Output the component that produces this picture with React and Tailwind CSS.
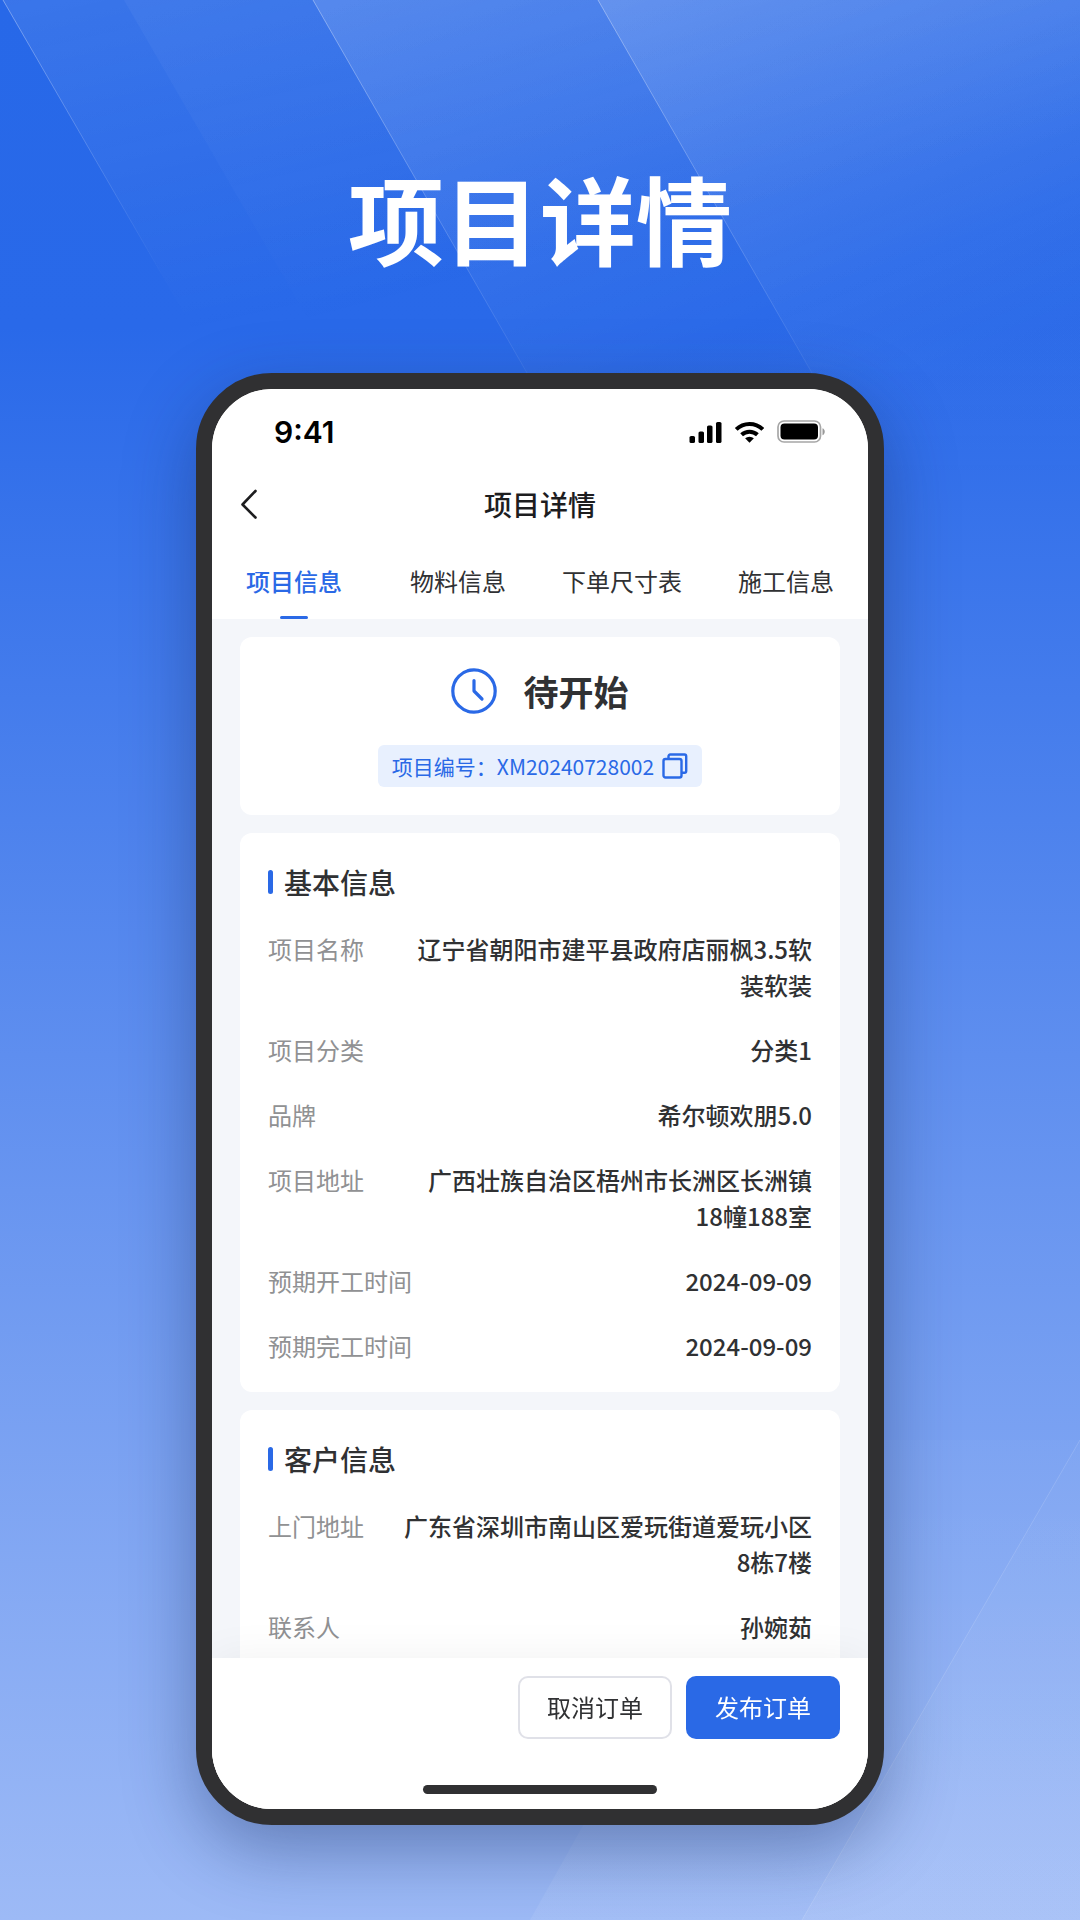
import React from "react";

const basicInfo = [
  ["项目名称", "辽宁省朝阳市建平县政府店丽枫3.5软装软装"],
  ["项目分类", "分类1"],
  ["品牌", "希尔顿欢朋5.0"],
  ["项目地址", "广西壮族自治区梧州市长洲区长洲镇18幢188室"],
  ["预期开工时间", "2024-09-09"],
  ["预期完工时间", "2024-09-09"],
];

const customerInfo = [
  ["上门地址", "广东省深圳市南山区爱玩街道爱玩小区8栋7楼"],
  ["联系人", "孙婉茹"],
];

const tabs = ["项目信息", "物料信息", "下单尺寸表", "施工信息"];

function Backdrop() {
  return (
    <svg
      aria-hidden="true"
      className="absolute inset-0 h-full w-full"
      viewBox="0 0 1080 1920"
      preserveAspectRatio="none"
    >
      <defs>
        <linearGradient id="base" x1="0" y1="0" x2="0" y2="1">
          <stop offset="0" stopColor="#2768e8" />
          <stop offset="0.17" stopColor="#2969e9" />
          <stop offset="1" stopColor="#9dbaf6" />
        </linearGradient>
        <linearGradient id="ray1" gradientUnits="userSpaceOnUse" x1="0" y1="0" x2="80" y2="360">
          <stop offset="0" stopColor="#fff" stopOpacity="0.09" />
          <stop offset="1" stopColor="#fff" stopOpacity="0" />
        </linearGradient>
        <linearGradient id="ray2" gradientUnits="userSpaceOnUse" x1="124" y1="0" x2="220" y2="360">
          <stop offset="0" stopColor="#fff" stopOpacity="0.04" />
          <stop offset="1" stopColor="#fff" stopOpacity="0" />
        </linearGradient>
        <linearGradient id="ray3" gradientUnits="userSpaceOnUse" x1="313" y1="0" x2="470" y2="430">
          <stop offset="0" stopColor="#fff" stopOpacity="0.13" />
          <stop offset="1" stopColor="#fff" stopOpacity="0.01" />
        </linearGradient>
        <linearGradient id="ray4" gradientUnits="userSpaceOnUse" x1="598" y1="0" x2="780" y2="440">
          <stop offset="0" stopColor="#fff" stopOpacity="0.13" />
          <stop offset="1" stopColor="#fff" stopOpacity="0.01" />
        </linearGradient>
        <linearGradient id="edge" gradientUnits="userSpaceOnUse" x1="0" y1="0" x2="0" y2="380">
          <stop offset="0" stopColor="#fff" stopOpacity="0.35" />
          <stop offset="1" stopColor="#fff" stopOpacity="0.06" />
        </linearGradient>
        <linearGradient id="edgeShort" gradientUnits="userSpaceOnUse" x1="0" y1="0" x2="0" y2="280">
          <stop offset="0" stopColor="#fff" stopOpacity="0.35" />
          <stop offset="1" stopColor="#fff" stopOpacity="0" />
        </linearGradient>
        <linearGradient id="fade" gradientUnits="userSpaceOnUse" x1="0" y1="0" x2="0" y2="480">
          <stop offset="0.75" stopColor="#fff" />
          <stop offset="1" stopColor="#000" />
        </linearGradient>
        <mask id="raysMask" maskUnits="userSpaceOnUse" x="0" y="0" width="1080" height="480">
          <rect width="1080" height="480" fill="url(#fade)" />
        </mask>
        <linearGradient id="rise" gradientUnits="userSpaceOnUse" x1="0" y1="1920" x2="0" y2="1440">
          <stop offset="0" stopColor="#fff" stopOpacity="0.07" />
          <stop offset="1" stopColor="#fff" stopOpacity="0.02" />
        </linearGradient>
      </defs>
      <rect width="1080" height="1920" fill="url(#base)" />
      <g mask="url(#raysMask)">
        <path d="M3 0H1080V480H280Z" fill="url(#ray1)" />
        <path d="M124 0H1080V480H401Z" fill="url(#ray2)" />
        <path d="M313 0H1080V480H588Z" fill="url(#ray3)" />
        <path d="M598 0H1080V480H873Z" fill="url(#ray4)" />
        <path d="M3 0L165 280" stroke="url(#edgeShort)" fill="none" />
        <path d="M313 0L527 373M598 0L812 373" stroke="url(#edge)" fill="none" />
      </g>
      <path d="M530 1920L800 1440H1080V1920Z" fill="url(#rise)" />
      <path d="M802 1920L1080 1440V1920Z" fill="url(#rise)" />
      <path d="M802 1920L1080 1440" stroke="#fff" strokeOpacity="0.14" fill="none" />
    </svg>
  );
}

function StatusIcons() {
  return (
    <svg width="136" height="24" viewBox="0 0 136 24" role="img" aria-label="信号、无线网络与电量">
      <g fill="#000">
        <rect x="0.500" y="16" width="5.500" height="7" rx="1.600" />
        <rect x="9.500" y="11.500" width="5.500" height="11.500" rx="1.600" />
        <rect x="18" y="5.500" width="5.500" height="17.500" rx="1.600" />
        <rect x="27" y="2" width="5.500" height="21" rx="1.600" />
      </g>
      <g fill="none" stroke="#000" strokeWidth="4">
        <path d="M47.200 9.400a19 19 0 0 1 26.600 0" />
        <path d="M52.600 14.800a11.600 11.600 0 0 1 15.800 0" />
      </g>
      <path d="M60.500 22.800l-4.400-4.500a6.800 6.800 0 0 1 8.800 0z" fill="#000" />
      <rect x="89" y="1" width="42.500" height="21" rx="6" fill="none" stroke="#000" strokeOpacity="0.35" strokeWidth="1.700" />
      <rect x="91.500" y="3.500" width="37.500" height="16" rx="4" fill="#000" />
      <path d="M133.500 8.200c3 1.200 3 5.600 0 7z" fill="#000" fillOpacity="0.4" />
    </svg>
  );
}

function InfoCard({ title, rows }) {
  return (
    <section className="shrink-0 rounded-xl bg-white p-7">
      <h2 className="flex items-center gap-[11px] text-[28px] leading-[42px] font-medium text-[#303133]">
        <span className="h-6 w-[5px] rounded-full bg-[#2a69e6]" />
        {title}
      </h2>
      <dl className="mt-7 flex flex-col gap-[29px] text-2xl leading-9">
        {rows.map(([label, value]) => (
          <div key={label} className="flex items-start justify-between gap-4">
            <dt className="shrink-0 text-[#909193]">{label}</dt>
            <dd className="max-w-[17em] text-right font-medium text-[#303133]">{value}</dd>
          </div>
        ))}
      </dl>
    </section>
  );
}

export default function App() {
  return (
    <main className="relative isolate flex min-h-screen flex-col items-center overflow-hidden bg-[#2768e8] px-6 pb-[95px] font-['Noto_Sans_CJK_SC',sans-serif]">
      <Backdrop />
      <h1 className="relative pt-[145px] text-center text-8xl leading-[144px] font-bold text-white">项目详情</h1>

      <div className="relative mt-[84px] w-full max-w-[688px] rounded-[76px] border-[16px] border-[#303032] bg-white shadow-[0_24px_70px_rgba(20,40,90,0.4)]">
        <div className="flex aspect-[656/1420] flex-col overflow-hidden rounded-[60px] bg-white">
          <div className="flex h-[77px] shrink-0 items-center justify-between pt-2 pr-[43px] pl-[62px]">
            <time className="font-['Inter',sans-serif] text-[30px] leading-9 font-semibold text-black">9:41</time>
            <StatusIcons />
          </div>

          <header className="grid h-[77px] shrink-0 grid-cols-[1fr_auto_1fr] items-center px-7 pb-0.5">
            <button type="button" aria-label="返回" className="flex w-6 items-center">
              <svg width="20" height="32" viewBox="0 0 20 32" fill="none" stroke="#1d1d1f" strokeWidth="2.600" strokeLinecap="round" strokeLinejoin="round">
                <path d="M15.500 3L2.500 16.500L15.500 29.500" />
              </svg>
            </button>
            <div className="text-[28px] leading-[42px] font-medium text-[#1d1d1f]">项目详情</div>
          </header>

          <nav className="grid h-[76px] shrink-0 grid-cols-4 text-2xl leading-9">
            {tabs.map((tab, i) => (
              <button
                key={tab}
                type="button"
                className={
                  i === 0
                    ? "relative whitespace-nowrap font-medium text-[#2a69e6]"
                    : "relative whitespace-nowrap text-[#303133]"
                }
              >
                {tab}
                {i === 0 && (
                  <span className="absolute bottom-0 left-1/2 h-[3px] w-7 -translate-x-1/2 rounded-full bg-[#2a69e6]" />
                )}
              </button>
            ))}
          </nav>

          <div className="flex min-h-0 flex-1 flex-col gap-[18px] overflow-y-auto bg-[#f4f6fa] px-7 pt-[18px] [scrollbar-width:none]">
            <section className="flex shrink-0 flex-col items-center rounded-xl bg-white pt-7 pb-7">
              <div className="flex items-center gap-[26px]">
                <svg width="46" height="46" viewBox="0 0 46 46" fill="none" stroke="#2a69e6" strokeWidth="3.200" strokeLinecap="round" strokeLinejoin="round" aria-hidden="true">
                  <circle cx="23" cy="23" r="21.200" />
                  <path d="M23 12.500V23L31 31" />
                </svg>
                <div className="text-[35px] leading-[52px] font-bold text-[#303133]">待开始</div>
              </div>
              <div className="mt-7 flex h-[42px] items-center gap-2 rounded-md bg-[#e8f0fe] px-3.5 text-[21px] leading-8 text-[#2a69e6]">
                <span>项目编号：XM20240728002</span>
                <button type="button" aria-label="复制项目编号">
                  <svg width="26" height="26" viewBox="0 0 26 26" fill="none" stroke="#2a69e6" strokeWidth="2.400" strokeLinejoin="round">
                    <rect x="1.500" y="6" width="18" height="18.500" rx="2" />
                    <path d="M6.500 6V3.200a1.700 1.700 0 0 1 1.700-1.700H22.500a1.700 1.700 0 0 1 1.700 1.700V18a1.700 1.700 0 0 1-1.700 1.700H19.500" />
                  </svg>
                </button>
              </div>
            </section>

            <InfoCard title="基本信息" rows={basicInfo} />
            <InfoCard title="客户信息" rows={customerInfo} />
          </div>

          <footer className="relative shrink-0 bg-white px-7 pt-[18px] pb-[15px] shadow-[0_0_42px_rgba(0,0,0,0.06)]">
            <div className="flex justify-end gap-3.5 text-2xl leading-9">
              <button type="button" className="h-[63px] w-[154px] rounded-[10px] border-2 border-[#e0e1e8] pb-0.5 text-[#303133]">取消订单</button>
              <button type="button" className="h-[63px] w-[154px] rounded-[10px] bg-[#2a69e6] pb-0.5 text-white">发布订单</button>
            </div>
            <div className="mx-auto mt-[46px] h-[9px] w-[234px] rounded-full bg-[#303032]" />
          </footer>
        </div>
      </div>
    </main>
  );
}
